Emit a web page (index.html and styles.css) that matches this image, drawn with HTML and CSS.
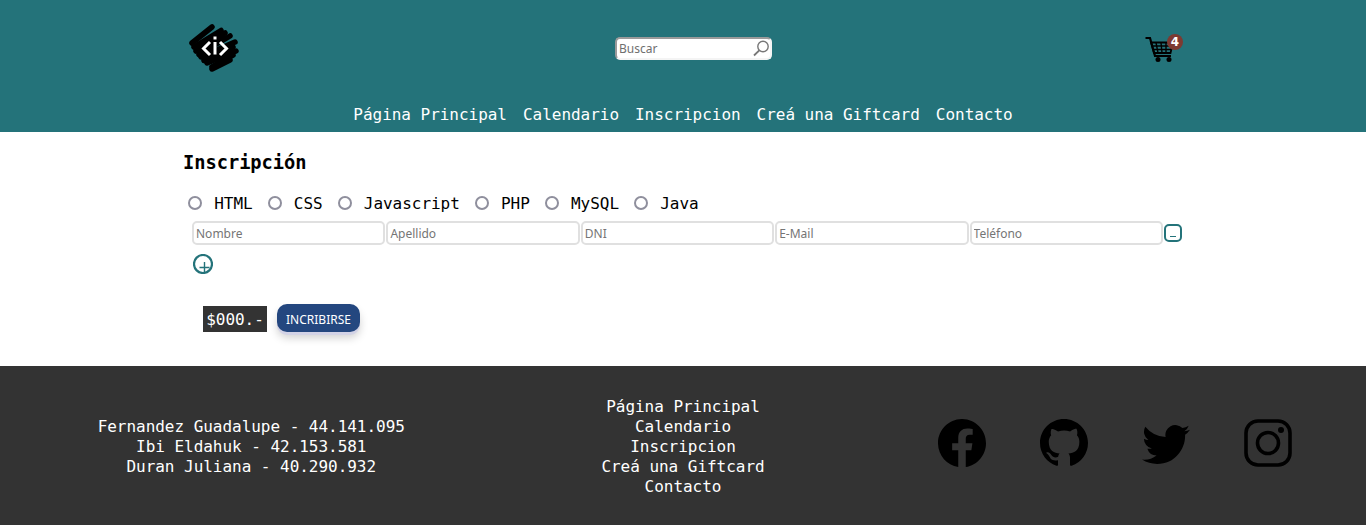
FILE: index.html
```html
<!DOCTYPE html>
<html lang="es">
<head>
<meta charset="utf-8">
<title>Inscripción</title>
<link rel="stylesheet" href="styles.css">
</head>
<body>
<header class="header">
  <div class="header-top">
    <a class="logo" href="#">
      <svg width="50" height="48" viewBox="0 0 50 48">
        <g stroke="#000" stroke-width="5.5" stroke-linecap="round" fill="none">
          <path d="M3 19 L23 3"/>
          <path d="M5 23 L32 6.500"/>
          <path d="M7 27 L36 9"/>
          <path d="M10 30.500 L41 12"/>
          <path d="M12 33 L46 18"/>
          <path d="M15 36.500 L44 23"/>
          <path d="M18 39 L47 27"/>
          <path d="M23 43 L44 31"/>
          <path d="M23 45 L41 36"/>
          <path d="M14 20 L36 14"/>
          <path d="M18 32 L40 22"/>
        </g>
        <g stroke="#fff" stroke-width="3" fill="none">
          <path d="M21 18 L14.500 24.500 L21 31"/>
          <path d="M31 18 L37.500 24.500 L31 31"/>
          <path d="M26 18 V30.500"/>
          <path d="M26 12.500 V15.500"/>
        </g>
      </svg>
    </a>
    <form class="search">
      <input class="search-input" type="text" placeholder="Buscar">
      <svg class="search-icon" width="18" height="18" viewBox="0 0 18 18">
        <circle cx="11" cy="7.500" r="5.200" fill="none" stroke="#777" stroke-width="1.400"/>
        <path d="M7.300 11.300 L2 16.500" stroke="#777" stroke-width="1.800" fill="none"/>
      </svg>
    </form>
    <a class="cart" href="#">
      <svg width="30" height="28" viewBox="0 0 30 28">
        <g fill="none" stroke="#000">
          <path d="M0.500 2 H5 L10 20 H26" stroke-width="2.200"/>
          <path d="M6 6.500 H28 L25.500 17 H9 Z" stroke-width="1.800"/>
          <path d="M7 10 H27 M8 13.500 H26 M11 6.500 L13 17 M16 6.500 L17 17 M21 6.500 L21 17" stroke-width="1.400"/>
        </g>
        <circle cx="13" cy="23.500" r="2.500"/>
        <circle cx="24" cy="23.500" r="2.500"/>
      </svg>
      <span class="cart-badge">4</span>
    </a>
  </div>
  <nav class="nav">
    <a href="#">Página Principal</a>
    <a href="#">Calendario</a>
    <a href="#">Inscripcion</a>
    <a href="#">Creá una Giftcard</a>
    <a href="#">Contacto</a>
  </nav>
</header>
<main class="main">
  <h3 class="title">Inscripción</h3>
  <div class="courses">
    <label class="course"><span class="radio"></span>HTML</label>
    <label class="course"><span class="radio"></span>CSS</label>
    <label class="course"><span class="radio"></span>Javascript</label>
    <label class="course"><span class="radio"></span>PHP</label>
    <label class="course"><span class="radio"></span>MySQL</label>
    <label class="course"><span class="radio"></span>Java</label>
  </div>
  <div class="person">
    <input class="field" type="text" placeholder="Nombre">
    <input class="field" type="text" placeholder="Apellido">
    <input class="field" type="text" placeholder="DNI">
    <input class="field" type="text" placeholder="E-Mail">
    <input class="field" type="text" placeholder="Teléfono">
    <button class="remove" type="button"><span class="remove-bar"></span></button>
  </div>
  <button class="add" type="button">
    <svg width="20" height="20" viewBox="0 0 20 20">
      <circle cx="10" cy="10" r="9" fill="none" stroke="#24737a" stroke-width="2.200"/>
      <path d="M11.500 8 V18.500 M6.500 13.500 H16.500" stroke="#24737a" stroke-width="1.400" fill="none"/>
    </svg>
  </button>
  <div class="checkout">
    <span class="price">$000.-</span>
    <button class="submit" type="button">INCRIBIRSE</button>
  </div>
</main>
<footer class="footer">
  <div class="authors">
    <span>Fernandez Guadalupe - 44.141.095</span>
    <span>Ibi Eldahuk - 42.153.581</span>
    <span>Duran Juliana - 40.290.932</span>
  </div>
  <nav class="footer-nav">
    <a href="#">Página Principal</a>
    <a href="#">Calendario</a>
    <a href="#">Inscripcion</a>
    <a href="#">Creá una Giftcard</a>
    <a href="#">Contacto</a>
  </nav>
  <div class="social">
    <a href="#"><svg width="48" height="48" viewBox="0 0 16 16"><path d="M16 8.049c0-4.446-3.582-8.05-8-8.05C3.58 0-.002 3.603-.002 8.05c0 4.017 2.926 7.347 6.75 7.951v-5.625h-2.03V8.05H6.75V6.275c0-2.017 1.195-3.131 3.022-3.131.876 0 1.791.157 1.791.157v1.98h-1.009c-.993 0-1.303.621-1.303 1.258v1.51h2.218l-.354 2.326H9.25V16c3.824-.604 6.75-3.934 6.75-7.951z"/></svg></a>
    <a href="#"><svg width="48" height="48" viewBox="0 0 16 16"><path d="M8 0C3.58 0 0 3.58 0 8c0 3.54 2.29 6.53 5.47 7.59.4.07.55-.17.55-.38 0-.19-.01-.82-.01-1.49-2.01.37-2.53-.49-2.69-.94-.09-.23-.48-.94-.82-1.13-.28-.15-.68-.52-.01-.53.63-.01 1.08.58 1.23.82.72 1.21 1.87.87 2.33.66.07-.52.28-.87.51-1.07-1.78-.2-3.64-.89-3.64-3.95 0-.87.31-1.59.82-2.15-.08-.2-.36-1.02.08-2.12 0 0 .67-.21 2.2.82.64-.18 1.32-.27 2-.27.68 0 1.36.09 2 .27 1.53-1.04 2.2-.82 2.2-.82.44 1.1.16 1.92.08 2.12.51.56.82 1.27.82 2.15 0 3.07-1.87 3.75-3.65 3.95.29.25.54.73.54 1.48 0 1.07-.01 1.93-.01 2.2 0 .21.15.46.55.38A8.012 8.012 0 0 0 16 8c0-4.42-3.58-8-8-8z"/></svg></a>
    <a href="#"><svg width="48" height="48" viewBox="0 0 16 16"><path d="M5.026 15c6.038 0 9.341-5.003 9.341-9.334 0-.14 0-.282-.006-.422A6.685 6.685 0 0 0 16 3.542a6.658 6.658 0 0 1-1.889.518 3.301 3.301 0 0 0 1.447-1.817 6.533 6.533 0 0 1-2.087.793A3.286 3.286 0 0 0 7.875 6.03a9.325 9.325 0 0 1-6.767-3.429 3.289 3.289 0 0 0 1.018 4.382A3.323 3.323 0 0 1 .64 6.575v.045a3.288 3.288 0 0 0 2.632 3.218 3.203 3.203 0 0 1-.865.115 3.23 3.23 0 0 1-.614-.057 3.283 3.283 0 0 0 3.067 2.277A6.588 6.588 0 0 1 .78 13.58a6.32 6.32 0 0 1-.78-.045A9.344 9.344 0 0 0 5.026 15z"/></svg></a>
    <a href="#"><svg width="48" height="48" viewBox="0 0 48 48"><rect x="2" y="2" width="44" height="44" rx="12" fill="none" stroke="#000" stroke-width="3.600"/><circle cx="24" cy="24" r="10.500" fill="none" stroke="#000" stroke-width="3.600"/><circle cx="37" cy="11" r="3"/></svg></a>
  </div>
</footer>
</body>
</html>
```
FILE: styles.css
```css
* { box-sizing: border-box; }
html, body { margin: 0; padding: 0; }
body {
  background: #fff;
  color: #000;
  font-family: "DejaVu Sans Mono", "Liberation Mono", monospace;
  font-size: 16px;
  letter-spacing: -0.032px;
  height: 525px;
  overflow: hidden;
}
a { color: inherit; text-decoration: none; }

.header {
  background: #24737a;
  height: 132px;
  color: #fff;
  display: flex;
  flex-direction: column;
}
.header-top {
  width: 1000px;
  margin: 0 auto;
  height: 96px;
  padding-top: 24px;
  display: grid;
  grid-template-columns: 432px 157px 1fr;
  align-items: start;
}
.logo { display: block; width: 50px; height: 48px; margin-left: 6px; }
.logo svg { display: block; }
.search {
  position: relative;
  margin-top: 13px;
  width: 157px;
  height: 23px;
}
.search-input {
  display: block;
  width: 157px;
  height: 23px;
  border: 2px solid #f4f4f4;
  border-top-color: #9a9a9a;
  border-left-color: #9a9a9a;
  border-radius: 5px;
  background: #fff;
  padding: 0 2px;
  font: 12px "Noto Sans", sans-serif;
  color: #666;
  outline: none;
}
.search-input::placeholder { color: #6f6f6f; opacity: 1; }
.search-icon { position: absolute; right: 2px; top: 2px; }
.cart {
  justify-self: end;
  position: relative;
  display: block;
  width: 38px;
  height: 28px;
  margin-top: 12px;
}
.cart svg { display: block; }
.cart-badge {
  position: absolute;
  right: 0;
  top: -2px;
  width: 16px;
  height: 16px;
  border-radius: 50%;
  background: #7d3a32;
  color: #fff;
  font: bold 12px/16px "DejaVu Sans", sans-serif;
  text-align: center;
}
.nav {
  display: flex;
  justify-content: center;
  gap: 16px;
  padding-top: 9px;
  line-height: 20px;
}

.main {
  width: 1000px;
  height: 234px;
  margin: 0 auto;
}
.title {
  margin: 0;
  padding-top: 20px;
  font-size: 18.72px;
  line-height: 22px;
  font-weight: bold;
}
.courses {
  display: flex;
  align-items: center;
  margin-top: 19px;
  padding-left: 5px;
  gap: 15px;
  height: 20px;
}
.course { display: flex; align-items: center; gap: 12.2px; }
.radio {
  width: 14px;
  height: 14px;
  border: 2px solid #8f8f9d;
  border-radius: 50%;
}
.person {
  display: flex;
  align-items: center;
  gap: 1px;
  margin-top: 8px;
  padding-left: 9px;
}
.field {
  width: 193.4px;
  height: 24px;
  border: 2px solid #e0e0e0;
  border-radius: 5px;
  background: #fff;
  padding: 0 2px;
  font: 12px "Noto Sans", sans-serif;
  outline: none;
}
.field::placeholder { color: #757575; opacity: 1; }
.remove {
  width: 18px;
  height: 18px;
  padding: 0;
  background: #fff;
  border: 2px solid #24737a;
  border-radius: 5px;
  display: flex;
  justify-content: center;
  align-items: flex-end;
}
.remove-bar { width: 6px; height: 1px; background: #24737a; margin-bottom: 3px; }
.add {
  display: block;
  margin: 9px 0 0 10px;
  padding: 0;
  width: 20px;
  height: 20px;
  border: 0;
  background: none;
}
.add svg { display: block; }
.checkout {
  display: flex;
  align-items: flex-end;
  gap: 10px;
  margin-top: 30px;
  padding-left: 20px;
}
.price {
  background: #333;
  color: #fff;
  height: 26px;
  width: 64px;
  line-height: 28px;
  text-align: center;
}
.submit {
  width: 83px;
  height: 28px;
  padding: 2px 0 0;
  border: 0;
  border-radius: 10px;
  background: #24477f;
  color: #fff;
  font: 12px "Noto Sans", sans-serif;
  box-shadow: 0 3px 0 #d3d3e6, 0 6px 8px rgba(0, 0, 0, .18);
}

.footer {
  background: #333;
  height: 159px;
  padding-top: 2px;
  color: #fff;
  display: grid;
  grid-template-columns: 1fr 357px 1fr;
  align-items: center;
  line-height: 20px;
  text-align: center;
}
.authors, .footer-nav { display: flex; flex-direction: column; }
.authors { padding-right: 2px; }
.social {
  display: flex;
  justify-content: center;
  gap: 54px;
  color: #000;
  margin: 0 0 7px 2px;
}
.social a { display: block; height: 48px; }
.social svg { display: block; }
```
